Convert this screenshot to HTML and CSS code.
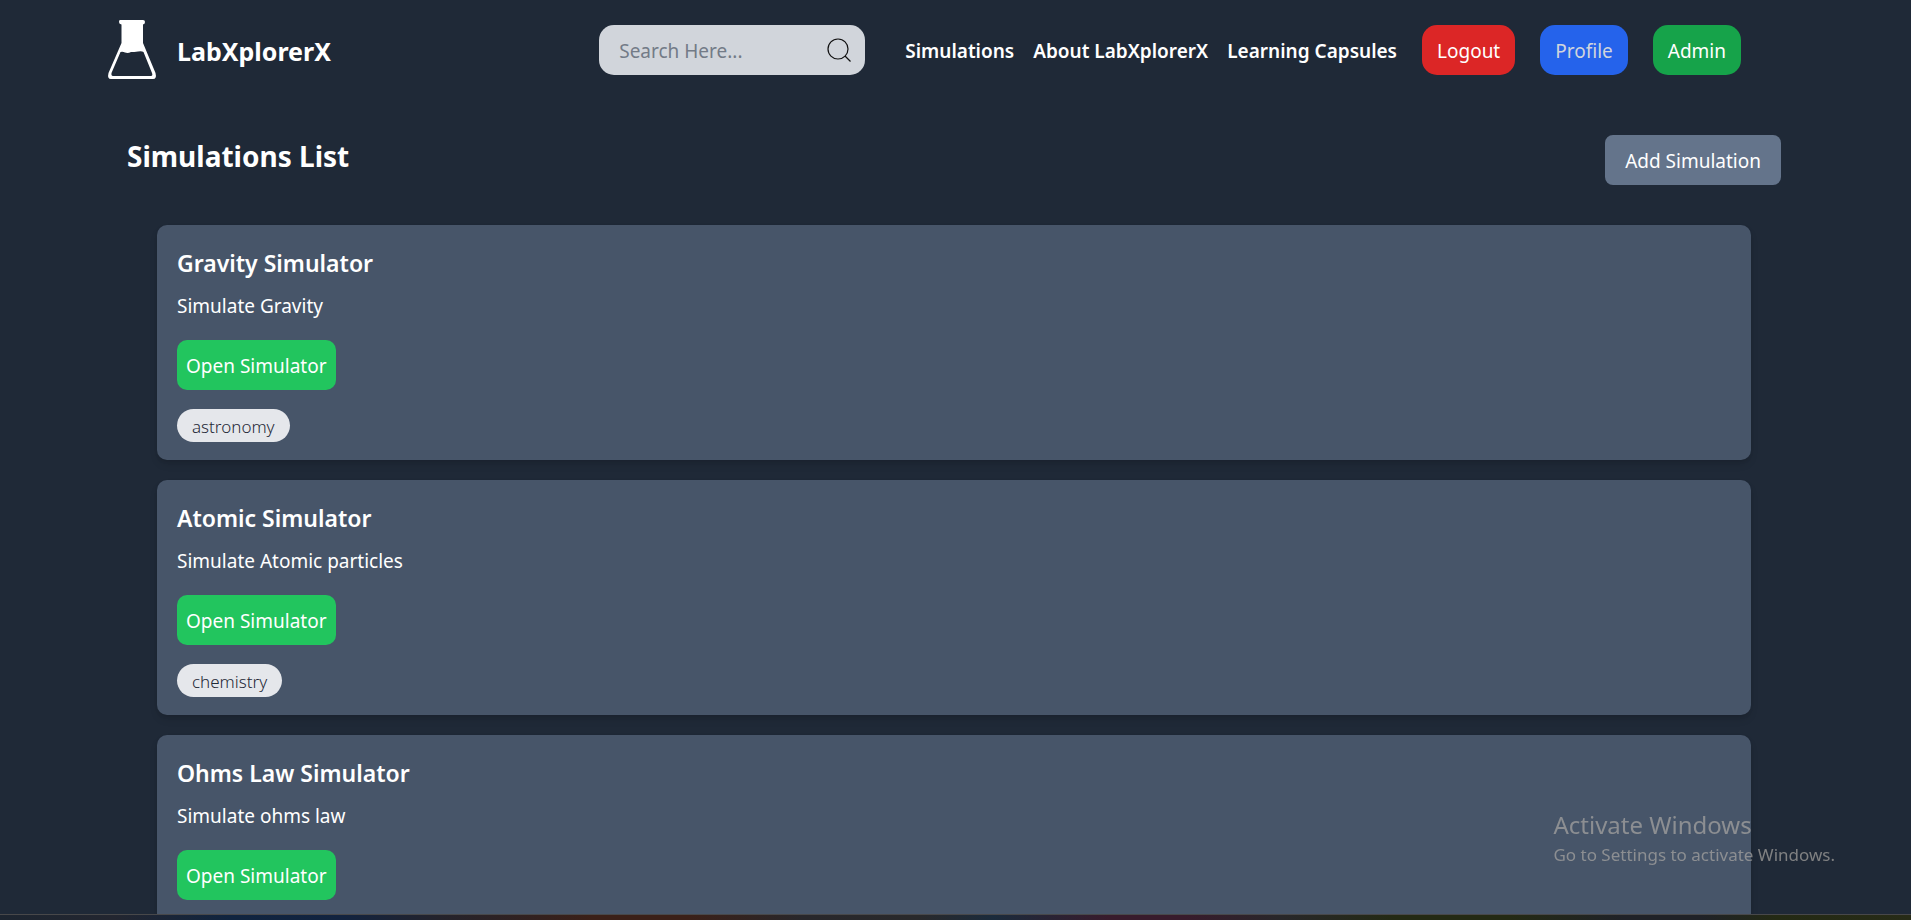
FILE: index.html
```html
<!DOCTYPE html>
<html lang="en">
<head>
<meta charset="utf-8">
<title>LabXplorerX</title>
<link rel="stylesheet" href="styles.css">
</head>
<body>
<header class="header">
  <a class="brand" href="#">
    <svg class="brand-icon" viewBox="0 0 50 60" aria-hidden="true">
      <path fill="#fff" fill-rule="evenodd" d="M13 0H36Q38 0 38 2Q38 4 36 4.500V23L48.500 53Q50 59 46 59H4Q0 59 1.500 53L14.500 23V4.500Q12 4 12 2Q12 0 13 0ZM13.500 32L4.500 53Q4 56 6 56H44Q46 56 45 53L36.500 32Q35 31 31 31.500Q27 32 24 32Q21 33.500 18 32.500Q16 31.500 13.500 32Z"/>
    </svg>
    <span class="brand-name">LabXplorerX</span>
  </a>
  <form class="search">
    <input class="search-input" type="text" placeholder="Search Here..." aria-label="Search">
    <button class="search-button" type="button" aria-label="Submit search">
      <svg class="search-icon" viewBox="0 0 24 24" fill="none" stroke="#111" stroke-width="1.200" aria-hidden="true"><circle cx="11" cy="11" r="10"/><path d="M18 18L23.500 23.500"/></svg>
    </button>
  </form>
  <nav class="nav">
    <div class="nav-links">
      <a class="nav-link" href="#">Simulations</a>
      <a class="nav-link" href="#">About LabXplorerX</a>
      <a class="nav-link" href="#">Learning Capsules</a>
    </div>
    <button class="pill pill-red" type="button">Logout</button>
    <button class="pill pill-blue" type="button">Profile</button>
    <button class="pill pill-green" type="button">Admin</button>
  </nav>
</header>
<main class="main">
  <div class="title-row">
    <h1 class="title">Simulations List</h1>
    <button class="add" type="button">Add Simulation</button>
  </div>
  <div class="cards">
    <article class="card">
      <h2 class="card-title">Gravity Simulator</h2>
      <p class="card-text">Simulate Gravity</p>
      <button class="open" type="button">Open Simulator</button>
      <span class="tag">astronomy</span>
    </article>
    <article class="card">
      <h2 class="card-title">Atomic Simulator</h2>
      <p class="card-text">Simulate Atomic particles</p>
      <button class="open" type="button">Open Simulator</button>
      <span class="tag">chemistry</span>
    </article>
    <article class="card">
      <h2 class="card-title">Ohms Law Simulator</h2>
      <p class="card-text">Simulate ohms law</p>
      <button class="open" type="button">Open Simulator</button>
    </article>
  </div>
</main>
<aside class="watermark">
  <p class="watermark-title">Activate Windows</p>
  <p class="watermark-text">Go to Settings to activate Windows.</p>
</aside>
<div class="taskbar"></div>
</body>
</html>
```
FILE: styles.css
```css
* { box-sizing: border-box; }
body {
  display: flex;
  flex-direction: column;
  margin: 0;
  height: 100vh;
  overflow: hidden;
  background: #1f2937;
  color: #fff;
  font: 400 19px/30px "Noto Sans", "Open Sans", sans-serif;
}
h1, h2, p { margin: 0; }
a { color: inherit; text-decoration: none; }
button, input { font: inherit; color: inherit; border: 0; margin: 0; }
button { cursor: pointer; white-space: nowrap; }

.header {
  display: flex;
  align-items: center;
  padding: 20px 170px 20px 107px;
}
.brand { display: flex; align-items: center; gap: 20px; margin-right: auto; }
.brand-icon { width: 50px; height: 60px; }
.brand-name { padding-top: 2px; font-size: 25px; font-weight: 700; line-height: 35px; }
.search {
  display: flex;
  align-items: center;
  width: 266px;
  height: 50px;
  padding: 0 14px 0 20px;
  border-radius: 15px;
  background: #d1d5db;
}
.search-input { flex: 1; min-width: 0; padding: 2px 0 0; background: none; color: #111; outline: 0; }
.search-input::placeholder { color: #737b87; opacity: 1; }
.search-button { display: flex; padding: 0; background: none; }
.search-icon { width: 24px; height: 24px; }
.nav { display: flex; align-items: center; gap: 25px; margin-left: 40px; white-space: nowrap; }
.nav-links { display: flex; gap: 19px; }
.nav-link { padding-top: 2px; font-weight: 600; }
.pill { height: 50px; padding: 2px 15px 0; border-radius: 15px; }
.pill-red { background: #dc2626; }
.pill-blue { background: #2563eb; color: #d1d5db; }
.pill-green { background: #16a34a; }

.main { flex: 1; min-height: 0; overflow: hidden; padding: 35px 130px 0 127px; }
.title-row { display: flex; justify-content: space-between; align-items: flex-start; margin-bottom: 40px; }
.title { font-size: 28px; font-weight: 700; line-height: 42px; }
.add { height: 50px; padding: 2px 20px 0; border-radius: 8px; background: #64748b; }
.cards { display: grid; gap: 20px; padding: 0 30px; }
.card {
  display: flex;
  flex-direction: column;
  align-items: flex-start;
  min-height: 235px;
  padding: 20px 20px 18px;
  border-radius: 10px;
  background: #475569;
  box-shadow: 0 5px 8px -1px rgba(0, 0, 0, 0.12), 0 2px 5px -2px rgba(0, 0, 0, 0.12);
}
.card-title { font-size: 23px; font-weight: 600; line-height: 37px; margin-bottom: 9px; }
.card-text { margin-bottom: 19px; }
.open { height: 50px; padding: 2px 9px 0; border-radius: 10px; background: #22c55e; }
.tag {
  margin-top: 19px;
  padding: 3px 15px 0;
  border-radius: 17px;
  background: #e5e7eb;
  color: #1f2937;
  font-size: 17px;
  font-weight: 300;
}

.watermark { position: fixed; right: 76px; bottom: 51px; color: rgba(173, 169, 165, 0.68); }
.watermark-title { font-size: 24px; line-height: 32px; }
.watermark-text { font-size: 17px; line-height: 28px; }
.taskbar {
  position: fixed;
  left: 0;
  right: 0;
  bottom: 0;
  height: 6px;
  border-top: 1px solid #48484a;
  background: linear-gradient(90deg, #1d2530 0%, #232630 6%, #10243f 12%, #12233f 18%, #24232c 23%, #3b2018 31%, #3b2018 36%, #28272b 42%, #29292b 48%, #1b2b3c 52%, #381b2c 58%, #381b2c 62%, #28272a 67%, #242a14 73%, #242a14 79%, #202228 85%, #202228 89%, #242a14 93%, #272b17 100%);
}
```
